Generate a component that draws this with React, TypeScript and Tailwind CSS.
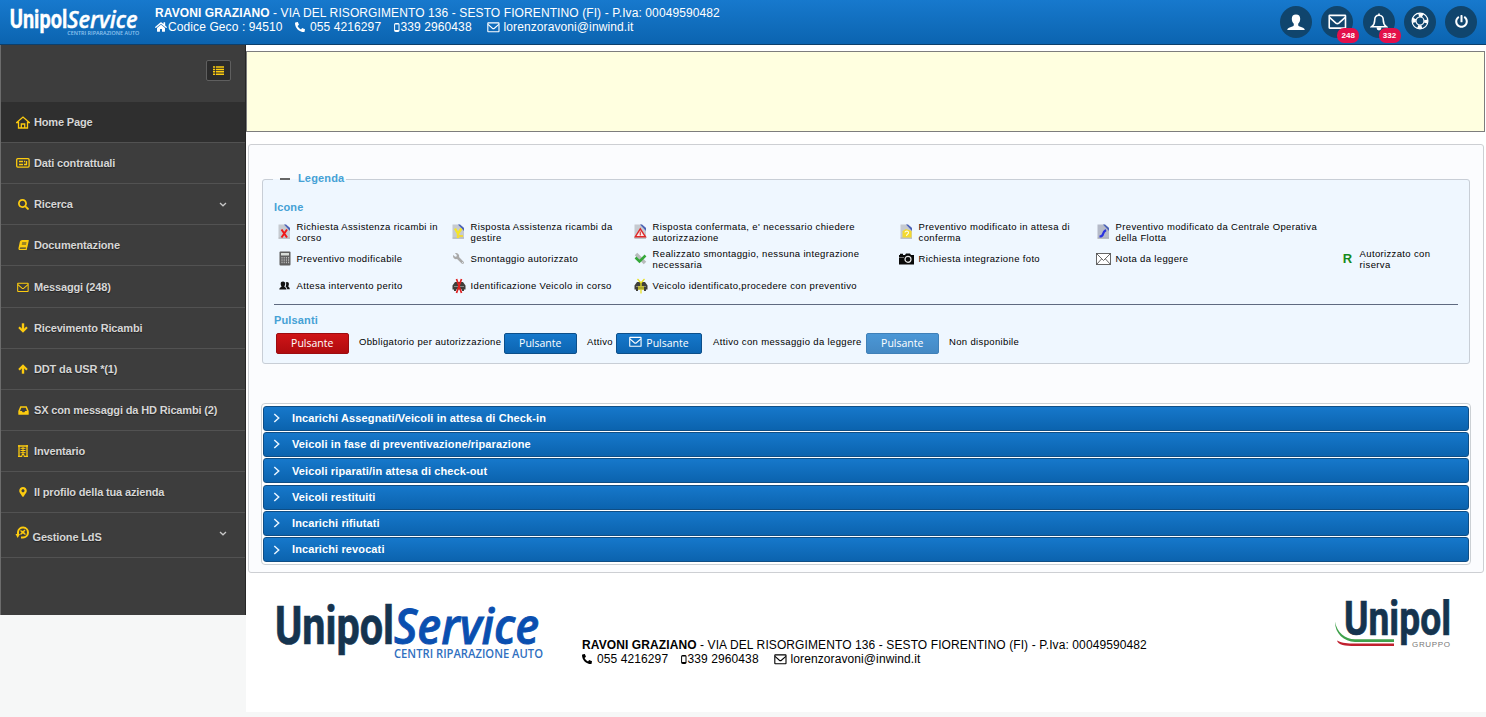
import React from "react";
import {
  FaHome,
  FaPhone,
  FaPowerOff,
  FaSearch,
  FaBook,
  FaMapMarkerAlt,
  FaWrench,
} from "react-icons/fa";

function Mobile({ className }: { className?: string }) {
  return (
    <svg viewBox="0 0 6 9" className={className} fill="none" stroke="currentColor">
      <rect x="0.6" y="0.5" width="4.4" height="8" rx="0.6" strokeWidth="1" />
      <path d="M1 7.6h4M1 1h4" strokeWidth="1.1" />
    </svg>
  );
}

function Envelope({ className }: { className?: string }) {
  return (
    <svg viewBox="0 0 14 12" className={className} fill="none" stroke="currentColor" strokeWidth="1.2">
      <rect x="0.8" y="1" width="12.2" height="9.6" rx="0.4" />
      <path d="M1 2.600l4.800 4.200q1.100 0.900 2.200 0L12.800 2.600" />
    </svg>
  );
}

function ServiceLogo({ className, dark, blue, small }: { className: string; dark: string; blue: string; small: string }) {
  return (
    <svg viewBox="0 0 272 62" className={className}>
      <text x="0" y="43" fontFamily="Roboto" fontWeight="700" fontSize="54" textLength="119" lengthAdjust="spacingAndGlyphs" fill={dark} stroke={dark} strokeWidth="0.700">
        Unipol
      </text>
      <text x="119" y="43" fontFamily="Open Sans" fontStyle="italic" fontWeight="600" fontSize="49" textLength="145" lengthAdjust="spacingAndGlyphs" fill={blue} stroke={blue} strokeWidth="0.900">
        Service
      </text>
      <text x="119" y="57" fontFamily="Open Sans" fontWeight="600" fontSize="12.600" textLength="149" lengthAdjust="spacingAndGlyphs" fill={small}>
        CENTRI RIPARAZIONE AUTO
      </text>
    </svg>
  );
}

function GruppoLogo() {
  return (
    <svg viewBox="0 0 120 54" className="h-[54px] w-[120px]">
      <text x="12" y="36" fontFamily="Roboto" fontWeight="700" fontSize="49" textLength="107" lengthAdjust="spacingAndGlyphs" fill="#15344f" stroke="#15344f" strokeWidth="0.700">
        Unipol
      </text>
      <text x="80" y="47.500" fontFamily="Liberation Sans" fontSize="8" textLength="38" fill="#777777">
        GRUPPO
      </text>
      <path d="M3 22.500C5 34 13 40 23 40.300H62V43H23C12 42.500 3 35 3 22.500z" fill="#3fa14b" />
      <path d="M5 41.500C11 44.300 15 44.500 23 44.500H62V47H23C13 47 6 46 5 41.500z" fill="#c0202e" />
    </svg>
  );
}

function HouseIcon() {
  return (
    <svg viewBox="0 0 14 13" className="h-[13px] w-[14px]" fill="none" stroke="currentColor" strokeWidth="1.300">
      <path d="M0.700 6.500L7 1l6.300 5.500H11.500V12H2.500V6.500z" />
      <path d="M5.300 12V8h3.400v4" />
    </svg>
  );
}

function CardIcon() {
  return (
    <svg viewBox="0 0 14 10" className="h-[10px] w-[14px]" fill="none" stroke="currentColor">
      <rect x="0.700" y="0.700" width="12.400" height="8.400" rx="1" strokeWidth="1.300" />
      <path d="M3 3.500h4M3 6.500h4M8 3.500h1.200M8 6.500h3M10.500 3v4" strokeWidth="1.300" />
    </svg>
  );
}

function ListIcon() {
  return (
    <svg viewBox="0 0 11 9" className="h-[9px] w-[11px]" fill="none" stroke="currentColor" strokeWidth="1.500">
      <path d="M0 1h2.200M0 3.400h2.200M0 5.800h2.200M0 8.200h2.200M3 1h8M3 3.400h8M3 5.800h8M3 8.200h8" />
    </svg>
  );
}

function ArrowIcon({ up }: { up?: boolean }) {
  return (
    <svg viewBox="0 0 10 10" className={`h-[10px] w-[10px] ${up ? "rotate-180" : ""}`} fill="none" stroke="currentColor">
      <path d="M5 0.300V8" strokeWidth="2.400" />
      <path d="M1 4.300L5 8.300L9 4.300" strokeWidth="2.100" />
    </svg>
  );
}

function InboxIcon() {
  return (
    <svg viewBox="0 0 11 9" className="h-[9px] w-[11px]">
      <path
        fill="currentColor"
        fillRule="evenodd"
        d="M2.300 0.300h6.400l2 4.700v3.200q0 .5-.6.5H.9q-.6 0-.6-.5V5zM3.300 1.800L2 5h1.900l.7 1.300h1.800L7.100 5H9L7.700 1.800z"
      />
    </svg>
  );
}

function BuildingIcon() {
  return (
    <svg viewBox="0 0 10 12" className="h-[12px] w-[10px]" fill="none" stroke="currentColor">
      <path d="M0 1h10M1 0v11.500M9 0v11.500M0 11.300h4M6 11.300h4" strokeWidth="1.300" />
      <path d="M2.500 3.300h5M2.500 5.500h5M2.500 7.700h5M5 2v7" strokeWidth="1" />
      <path d="M4 11.500V9.500h2v2" strokeWidth="1" />
    </svg>
  );
}

function LdsIcon() {
  return (
    <svg viewBox="0 0 14 14" className="h-[14px] w-[14px]" fill="none" stroke="currentColor">
      <path d="M3 8V6a5 5 0 1 1 5 5.500H6" strokeWidth="2" />
      <path d="M0.500 8h4.500L2.700 12z" fill="currentColor" stroke="none" />
      <path d="M5.500 4.500l5 4M10 4l-4.500 4.500" strokeWidth="1.400" />
      <circle cx="8" cy="6.200" r="1" fill="currentColor" />
    </svg>
  );
}

function UserIcon() {
  return (
    <svg viewBox="0 0 18 17" className="h-[17px] w-[18px]" fill="currentColor">
      <path d="M9 0.500c2.800 0 4.200 1.600 4.200 4.200 0 2.200-.8 3.900-2 5v1.300c0 .8.600 1.100 1.500 1.500l3.300 1.300c1.100.5 1.700 1.100 1.700 2.200H.3c0-1.100.6-1.700 1.700-2.200l3.300-1.300c.9-.4 1.500-.7 1.500-1.500V9.700c-1.200-1.100-2-2.800-2-5C4.800 2.100 6.200.5 9 .5z" />
    </svg>
  );
}

function BellIcon() {
  return (
    <svg viewBox="0 0 18 18" className="h-[18px] w-[18px]" fill="none" stroke="currentColor" strokeWidth="1.600">
      <path d="M9 2.200c-3 0-4.300 2.200-4.300 5 0 3.600-1 5-3 6.500h14.600c-2-1.500-3-2.900-3-6.500 0-2.800-1.300-5-4.300-5z" />
      <path d="M9 0.500v2M7.400 15a1.600 1.600 0 0 0 3.200 0z" fill="currentColor" />
    </svg>
  );
}

function RingIcon() {
  return (
    <svg viewBox="0 0 18 18" className="h-[18px] w-[18px]" fill="none" stroke="currentColor">
      <circle cx="9" cy="9" r="7.900" strokeWidth="1.200" />
      <circle cx="9" cy="9" r="4" strokeWidth="1.200" />
      <circle cx="9" cy="9" r="6" strokeWidth="3.600" strokeDasharray="4.200 5.225" strokeDashoffset="2.100" />
    </svg>
  );
}

type DocMark = "x" | "v" | "warn" | "q" | "pen";

function DocIcon({ mark }: { mark: DocMark }) {
  return (
    <svg viewBox="0 0 13 15" className="h-[15px] w-[13px]" fill="none">
      <path d="M0.500 0.500H8L12 4V14.500H0.500z" fill={mark === "pen" ? "#b5bac8" : "#c6cad0"} />
      <path d="M6 0.500H8L12 4V7z" fill="#4a62b8" />
      <path d="M0.500 14.200H12" stroke="#9a9a9a" strokeWidth="0.600" />
      {mark === "x" && <path d="M3.500 5.500l5.500 8M9 5.500l-5.500 8" stroke="#f01818" strokeWidth="2" />}
      {mark === "v" && (
        <>
          <path d="M3 4.500L6 9.500L9.500 4.500M6 9V14" stroke="#f5e526" strokeWidth="2.400" />
          <path d="M5 12h6" stroke="#f0d840" strokeWidth="2" />
        </>
      )}
      {mark === "warn" && (
        <>
          <path d="M6.300 4.800L11.500 12.800H1.200z" fill="#fbe9e9" stroke="#e02828" strokeWidth="1.400" />
          <path d="M6.300 7.500v4" stroke="#d04040" strokeWidth="1.200" />
        </>
      )}
      {mark === "q" && (
        <>
          <path d="M2.500 7L6 5l5.500 2v6.500h-9z" fill="#f3d92e" />
          <path d="M5 8.500c0-2 4-1.800 3.500.5C8 10.500 6.500 10 6.500 12" stroke="#fffbe0" strokeWidth="1.100" />
        </>
      )}
      {mark === "pen" && <path d="M2.500 12.500q3 0 3.500-2.500t3-4" stroke="#2a32e0" strokeWidth="2.200" />}
    </svg>
  );
}

function CalculatorIcon() {
  return (
    <svg viewBox="0 0 12 15" className="h-[15px] w-[12px]" fill="none">
      <rect x="0.500" y="0.500" width="11" height="14" rx="1" fill="#5f5f5f" />
      <rect x="2" y="2" width="8" height="2.500" fill="#d8dcd8" />
      <path d="M3 6v7M5.200 6v7M7.400 6v7M9.600 6v7" stroke="#c5c5c5" strokeWidth="1" strokeDasharray="1.500 0.800" />
    </svg>
  );
}

function CameraIcon() {
  return (
    <svg viewBox="0 0 15 12" className="h-[12px] w-[15px]" fill="none">
      <path d="M0 2h1V0.800h3V2h2l1-1.500h4L12 2h3v9.500H0z" fill="#0a0a0a" />
      <path d="M0 4.500h5" stroke="#999" strokeWidth="0.700" />
      <circle cx="9" cy="6.300" r="3" stroke="#e6e6e6" strokeWidth="1.200" />
    </svg>
  );
}

function UsersIcon() {
  return (
    <svg viewBox="0 0 11 10" className="h-[10px] w-[11px]" fill="#111">
      <path d="M4 0.500c1.600 0 2.200 1 2.200 2.200S5.500 5 5.300 5.500c.2.800 2.200 1 2.200 3H.3c0-2 2-2.200 2.300-3C2.300 5 1.700 4 1.700 2.700S2.400.5 4 .5z" />
      <path d="M8 1c1.300 0 1.900.8 1.900 1.900S9.400 4.700 9.200 5.200c.2.800 1.600 1.100 1.600 3H8.200c-.1-1.500-1-2-1.600-2.600C7.300 4 7.500 2.500 6.700 1.500 7 1.200 7.500 1 8 1z" />
    </svg>
  );
}

function CarIcon({ color, ok }: { color: string; ok?: boolean }) {
  return (
    <svg viewBox="0 0 14 16" className="h-[16px] w-[14px]" fill="none">
      <path d="M0.500 7.500L3 4h8l2.500 3.500v4H12V13H10v-1.500H4V13H2v-1.500H0.500z" fill="#3f3f3a" />
      <path d="M2 8.500h10" stroke="#999" strokeWidth="0.800" />
      {ok ? (
        <path d="M3.500 1L7 5l3.500-4M7 5v10.500M5 8v4M9 8v4" stroke={color} strokeWidth="1.300" />
      ) : (
        <path d="M4.500 1l5 14M9.500 1l-5 14" stroke={color} strokeWidth="1.700" />
      )}
    </svg>
  );
}

function DoneIcon() {
  return (
    <svg viewBox="0 0 13 13" className="h-[13px] w-[13px]" fill="none">
      <path d="M2 2l9 9" stroke="#b8bcbc" strokeWidth="3.500" />
      <path d="M1.500 5.500L5.500 9.500L11.500 3.500" stroke="#35a83a" strokeWidth="2.500" />
    </svg>
  );
}

function NoteIcon() {
  return (
    <svg viewBox="0 0 15 12" className="h-[12px] w-[15px]" fill="#fff" stroke="#555" strokeWidth="0.900">
      <rect x="0.500" y="0.500" width="14" height="11" />
      <path d="M0.500 0.500L7.500 7.500L14.500 0.500M0.500 11.500L5.500 6M14.500 11.500L9.500 6" fill="none" />
    </svg>
  );
}

const contact = "RAVONI GRAZIANO";
const address = " - VIA DEL RISORGIMENTO 136 - SESTO FIORENTINO (FI) - P.Iva: 00049590482";

function Badge({ children }: { children: React.ReactNode }) {
  return (
    <span className="absolute top-[22px] left-4 flex h-[15px] w-[22px] items-center justify-center rounded-[7px] bg-[#e3104a] text-[8px] font-bold text-white">
      {children}
    </span>
  );
}

function RoundButton({ children, badge }: { children: React.ReactNode; badge?: string }) {
  return (
    <button className="relative flex h-8 w-8 items-center justify-center rounded-full bg-[#10456d] text-white">
      {children}
      {badge && <Badge>{badge}</Badge>}
    </button>
  );
}

function ContactLine() {
  return (
    <>
      <FaPhone className="h-[10px] w-[10px] -scale-x-100" />
      <span className="ml-[5px] w-[83.500px]">055 4216297</span>
      <Mobile className="h-[9px] w-[6px]" />
      <span className="ml-px w-[86px]">339 2960438</span>
      <Envelope className="h-[11px] w-[13px]" />
      <span className="ml-[4px]">lorenzoravoni@inwind.it</span>
    </>
  );
}

function Header() {
  return (
    <header className="flex h-[45px] items-start border-b border-[#0d3f6b] bg-linear-to-b from-[#1779cd] to-[#0b64b0] text-white">
      <ServiceLogo className="mt-[7px] ml-[9px] h-[30px] w-[133px] shrink-0" dark="#ffffff" blue="#ffffff" small="#8fc4f0" />
      <div className="ml-[13px] pt-[6px] text-[12px] leading-[14px] tracking-[0.100px] whitespace-nowrap">
        <div>
          <b>{contact}</b>
          {address}
        </div>
        <div className="flex items-center">
          <FaHome className="h-[12px] w-[12px]" />
          <span className="ml-px w-[127px]">Codice Geco : 94510</span>
          <ContactLine />
        </div>
      </div>
      <div className="mt-[6px] mr-[9px] ml-auto flex gap-[9.250px]">
        <RoundButton>
          <UserIcon />
        </RoundButton>
        <RoundButton badge="248">
          <Envelope className="h-[16px] w-[19px]" />
        </RoundButton>
        <RoundButton badge="332">
          <BellIcon />
        </RoundButton>
        <RoundButton>
          <span className="mb-[2px]">
            <RingIcon />
          </span>
        </RoundButton>
        <RoundButton>
          <FaPowerOff className="mb-[1px] h-[13px] w-[13px]" />
        </RoundButton>
      </div>
    </header>
  );
}

type MenuItem = { label: string; icon: React.ReactNode; active?: boolean; arrow?: boolean; size?: string };

const menu: MenuItem[] = [
  { label: "Home Page", icon: <HouseIcon />, active: true },
  { label: "Dati contrattuali", icon: <CardIcon /> },
  { label: "Ricerca", icon: <FaSearch className="h-[11px] w-[11px]" />, arrow: true },
  { label: "Documentazione", icon: <FaBook className="h-[10px] w-[11px] -skew-x-12" /> },
  { label: "Messaggi (248)", icon: <Envelope className="h-[11px] w-[12px]" />, size: "h-[42px] pt-px" },
  { label: "Ricevimento Ricambi", icon: <ArrowIcon /> },
  { label: "DDT da USR *(1)", icon: <ArrowIcon up /> },
  { label: "SX con messaggi da HD Ricambi (2)", icon: <InboxIcon /> },
  { label: "Inventario", icon: <BuildingIcon /> },
  { label: "Il profilo della tua azienda", icon: <FaMapMarkerAlt className="h-[10px] w-[8px]" /> },
];

function Caret() {
  return (
    <svg viewBox="0 0 8 5" className="mr-[18px] ml-auto h-[5px] w-[8px]" fill="none" stroke="#c8c8c8" strokeWidth="1.300">
      <path d="M1 1l3 2.800L7 1" />
    </svg>
  );
}

function Sidebar() {
  return (
    <aside className="h-[570px] w-[246px] shrink-0 border-r border-l border-r-[#262626] border-l-[#6c6c6c] bg-[#3d3d3d] text-[11px] font-bold tracking-[-0.150px] text-[#d6d6d6]">
      <div className="flex h-[57px] items-start justify-end pt-[15px] pr-[14px]">
        <button className="flex h-[21px] w-[25px] items-center justify-center rounded-xs border border-[#5f5f5f] bg-[#2b2b2b] text-[#fccb0f]">
          <ListIcon />
        </button>
      </div>
      {menu.map((m) => (
        <div
          key={m.label}
          className={`flex items-center border-b border-[#525252] ${m.size ?? "h-[41px]"} ${m.active ? "bg-[#2f2f2f]" : ""}`}
        >
          <span className="ml-[15px] flex w-[14px] justify-center text-[#fccb0f]">{m.icon}</span>
          <span className="ml-[4px] [text-shadow:0_1px_1px_#222]">{m.label}</span>
          {m.arrow && <Caret />}
        </div>
      ))}
      <div className="flex h-[45px] items-center border-b border-[#525252]">
        <span className="mb-[4px] ml-[14px] text-[#fccb0f]">
          <LdsIcon />
        </span>
        <span className="mt-[4px] ml-[3.500px] [text-shadow:0_1px_1px_#222]">Gestione LdS</span>
        <span className="mb-[4px] ml-auto">
          <Caret />
        </span>
      </div>
    </aside>
  );
}

type LegendItem = { icon: React.ReactNode; lines: string[] } | null;

const legend: LegendItem[] = [
  { icon: <DocIcon mark="x" />, lines: ["Richiesta Assistenza ricambi in", "corso"] },
  { icon: <DocIcon mark="v" />, lines: ["Risposta Assistenza ricambi da", "gestire"] },
  { icon: <DocIcon mark="warn" />, lines: ["Risposta confermata, e' necessario chiedere", "autorizzazione"] },
  { icon: <DocIcon mark="q" />, lines: ["Preventivo modificato in attesa di", "conferma"] },
  { icon: <DocIcon mark="pen" />, lines: ["Preventivo modificato da Centrale Operativa", "della Flotta"] },
  null,
  { icon: <CalculatorIcon />, lines: ["Preventivo modificabile"] },
  { icon: <FaWrench className="h-[11px] w-[11px] -scale-x-100 text-[#a9a9a9]" />, lines: ["Smontaggio autorizzato"] },
  { icon: <DoneIcon />, lines: ["Realizzato smontaggio, nessuna integrazione", "necessaria"] },
  { icon: <CameraIcon />, lines: ["Richiesta integrazione foto"] },
  { icon: <NoteIcon />, lines: ["Nota da leggere"] },
  { icon: <b className="text-[13px] tracking-normal text-[#158a1c]">R</b>, lines: ["Autorizzato con", "riserva"] },
  { icon: <UsersIcon />, lines: ["Attesa intervento perito"] },
  { icon: <CarIcon color="#e02020" />, lines: ["Identificazione Veicolo in corso"] },
  { icon: <CarIcon color="#e8e020" ok />, lines: ["Veicolo identificato,procedere con preventivo"] },
];

function PushButton({ tone, envelope }: { tone: "red" | "blue" | "light"; envelope?: boolean }) {
  const tones = {
    red: "border-[#9c0c10] from-[#cf1518] to-[#b00b0e]",
    blue: "border-[#0c4f8a] from-[#1678cb] to-[#0c65b2]",
    light: "border-[#3f80b8] from-[#4b97d6] to-[#4489c4]",
  };
  return (
    <button
      className={`flex h-[21px] items-center justify-center rounded-xs border bg-linear-to-b font-['Open_Sans',sans-serif] text-[10.500px] tracking-normal text-white ${tones[tone]} ${envelope ? "w-[86px]" : "w-[72.500px]"}`}
    >
      {envelope && <Envelope className="mr-[4px] mb-[2px] h-[12px] w-[13px]" />}
      <span className="pt-[2px]">Pulsante</span>
    </button>
  );
}

function Legend() {
  return (
    <fieldset className="h-[192px] min-w-0 rounded-[3px] border border-[#c8ced6] bg-[#eff7ff] pr-[11px] pl-[11px]">
      <legend className="-ml-px flex h-[15px] items-center pr-[2px] pb-[2px] pl-[7px] text-[11px] font-bold tracking-[0.150px] text-[#45a1d5]">
        <span className="mr-[8px] h-[2px] w-[10px] bg-[#666]" />
        Legenda
      </legend>
      <h3 className="mt-[13px] h-[14px] text-[11px] leading-[14px] font-bold tracking-[0.150px] text-[#45a1d5]">Icone</h3>
      <div className="mt-[4px] grid grid-cols-[174px_182px_266px_197px_244px_1fr] grid-rows-[27px_27px_27px] text-[9.500px] leading-[11px] tracking-[0.350px] whitespace-nowrap text-black">
        {legend.map((item, i) => (
          <div key={i} className="flex items-center">
            {item && (
              <>
                <span className="flex w-[22.600px] justify-center pr-[1.500px]">{item.icon}</span>
                <span>
                  {item.lines.map((l) => (
                    <span key={l} className="block">
                      {l}
                    </span>
                  ))}
                </span>
              </>
            )}
          </div>
        ))}
      </div>
      <hr className="mt-[5px] border-[#5f6a80]" />
      <h3 className="mt-[7.500px] h-[14px] text-[11px] leading-[14px] font-bold tracking-[0.150px] text-[#45a1d5]">Pulsanti</h3>
      <div className="mt-[6px] ml-[2px] flex items-center text-[9.500px] tracking-[0.350px] whitespace-nowrap text-black">
        <PushButton tone="red" />
        <span className="mb-[1px] ml-[10.500px] w-[145px]">Obbligatorio per autorizzazione</span>
        <PushButton tone="blue" />
        <span className="mb-[1px] ml-[10.500px] w-[29px]">Attivo</span>
        <PushButton tone="blue" envelope />
        <span className="mb-[1px] ml-[11px] w-[153px]">Attivo con messaggio da leggere</span>
        <PushButton tone="light" />
        <span className="mb-[1px] ml-[10.500px]">Non disponibile</span>
      </div>
    </fieldset>
  );
}

const sections = [
  "Incarichi Assegnati/Veicoli in attesa di Check-in",
  "Veicoli in fase di preventivazione/riparazione",
  "Veicoli riparati/in attesa di check-out",
  "Veicoli restituiti",
  "Incarichi rifiutati",
  "Incarichi revocati",
];

function Accordion() {
  return (
    <div className="-mx-px mt-[39px] flex h-[162px] flex-col gap-[1.300px] rounded-[4px] border border-[#cbd0d4] bg-white px-px pt-[1.700px]">
      {sections.map((s) => (
        <div
          key={s}
          className="flex h-[25px] shrink-0 items-center rounded-[3px] border border-[#0f4e85] bg-linear-to-b from-[#1678cb] to-[#0b63ae] pl-[9px] text-[11px] font-bold tracking-[0.115px] text-white"
        >
          <svg viewBox="0 0 7 10" className="h-[10px] w-[7px]" fill="none" stroke="#e8f4ff" strokeWidth="1.500">
            <path d="M1.300 1L5.700 5L1.300 9" />
          </svg>
          <span className="ml-[12px]">{s}</span>
        </div>
      ))}
    </div>
  );
}

function Footer() {
  return (
    <footer className="flex h-[139px] items-start bg-white">
      <ServiceLogo className="mt-[28px] ml-[29px] h-[62px] w-[272px] shrink-0" dark="#15344f" blue="#0a4fb0" small="#2f6fc0" />
      <div className="mt-[65px] ml-[35px] text-[12px] leading-[14px] tracking-[0.100px] whitespace-nowrap text-black">
        <div>
          <b>{contact}</b>
          {address}
        </div>
        <div className="flex items-center">
          <ContactLine />
        </div>
      </div>
      <div className="mt-[26px] mr-[34px] ml-auto">
        <GruppoLogo />
      </div>
    </footer>
  );
}

export default function App() {
  return (
    <div className="h-[717px] w-full overflow-hidden bg-[#f6f7f7] font-['Liberation_Sans',Arial,sans-serif]">
      <Header />
      <div className="flex items-start">
        <Sidebar />
        <main className="min-w-0 flex-1 bg-white pt-[6px]">
          <div className="mr-px h-[81px] border border-[#7d7d7d] bg-[#ffffe0]" />
          <section className="mt-[12px] mr-[2px] ml-[2px] h-[429px] rounded-[3px] border border-[#cdcfd3] bg-[#fbfcfe] px-[13px] pt-[27px]">
            <Legend />
            <Accordion />
          </section>
          <Footer />
        </main>
      </div>
    </div>
  );
}
